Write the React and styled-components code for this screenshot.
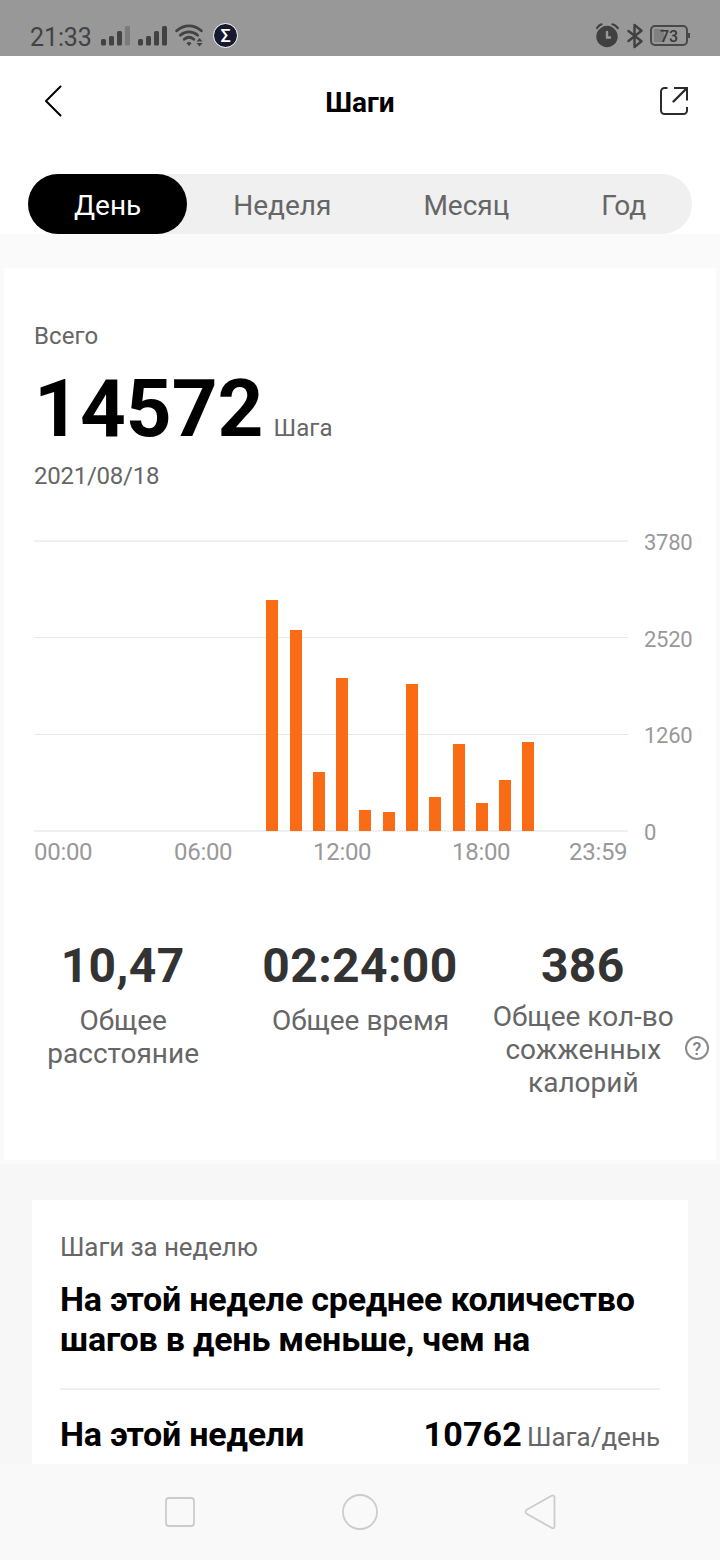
import React from 'react'
import styled, { createGlobalStyle } from 'styled-components'

const MAX_STEPS = 3780
const gridValues = [3780, 2520, 1260, 0]
const timeLabels = ['00:00', '06:00', '12:00', '18:00', '23:59']
const tabs = ['День', 'Неделя', 'Месяц', 'Год']
// steps per hour, 00 - 23
const hours = [
  0, 0, 0, 0, 0, 0, 0, 0, 0, 3016, 2626, 765,
  1988, 274, 244, 1910, 438, 1130, 360, 665, 1156, 0, 0, 0,
]

const SignalIcon = ({ weak }) => (
  <svg width='30' height='22' viewBox='0 0 30 22' fill='#424242'>
    <rect x='0' y='14' width='5' height='6.500' rx='1.500' />
    <rect x='8' y='11' width='5' height='9.500' rx='1.500' />
    <rect x='16' y='6' width='5' height='14.500' rx='1.500' />
    <rect x='24' y='1' width='5' height='19.500' rx='1.500' fill={weak ? '#7b7b7b' : '#424242'} />
  </svg>
)

const WifiIcon = () => (
  <svg width='28' height='23' viewBox='0 0 28 23' fill='none' stroke='#424242' strokeWidth='2.800' strokeLinecap='round'>
    <path d='M1.700 6.700C9 .200 19 .200 26.300 6.700' />
    <path d='M5.300 11.200C10.500 6.700 17.500 6.700 22.700 11.200' />
    <path d='M9.200 15.300C12.200 12.700 15.800 12.700 18.800 15.300' />
    <path d='M11.500 19.200a3.400 3.400 0 0 1 5 0L14 22Z' fill='#424242' stroke='none' />
    <path d='M21.500 17.500L24.500 14L27.500 17.500ZM21.500 19L24.500 22.500L27.500 19Z' fill='#424242' stroke='none' />
  </svg>
)

const AlarmIcon = () => (
  <svg width='24' height='25' viewBox='0 0 24 25' fill='none' strokeLinecap='round'>
    <circle cx='11' cy='13.500' r='10.700' fill='#404040' />
    <path d='M.800 5L5.500 1.300M16.500 1.300L21.500 5' stroke='#989898' strokeWidth='5' />
    <path d='M1.100 5Q2.800 2.300 5.500 1.300M16.500 1.300Q19.700 2.300 21.700 5' stroke='#404040' strokeWidth='2.200' />
    <path d='M11 9V14.500H14' stroke='#989898' strokeWidth='2.400' />
  </svg>
)

const BluetoothIcon = () => (
  <svg width='16' height='26' viewBox='0 0 16 26' fill='none' stroke='#404040' strokeWidth='2.400' strokeLinejoin='round' strokeLinecap='round'>
    <path d='M1.500 8L14.500 18.300L7.500 24V2L14.500 7.700L1.500 18' />
  </svg>
)

const BackIcon = () => (
  <svg width='20' height='32' viewBox='0 0 20 32' fill='none' stroke='#000' strokeWidth='2' strokeLinecap='round' strokeLinejoin='round'>
    <path d='M16.500 1.500L2 16L16.500 30.500' />
  </svg>
)

const ShareIcon = () => (
  <svg width='30' height='30' viewBox='0 0 30 30' fill='none' stroke='#2b2b2b' strokeWidth='2'>
    <path d='M8.500 2H5.500a3.500 3.500 0 0 0-3.500 3.500V24.500A3.500 3.500 0 0 0 5.500 28H24.500A3.500 3.500 0 0 0 28 24.500V21' />
    <path d='M15 2H28V14.500' />
    <path d='M27.500 2.500L14.500 15.500' strokeWidth='2.400' strokeLinecap='round' />
  </svg>
)

const App = () => {
  return (
    <Screen>
      <GlobalStyle />
      <StatusBar>
        <Clock>21:33</Clock>
        <SignalIcon weak />
        <SignalIcon />
        <WifiIcon />
        <Badge>Σ</Badge>
        <StatusRight>
          <AlarmIcon />
          <BluetoothIcon />
          <Battery>73</Battery>
        </StatusRight>
      </StatusBar>
      <Header>
        <BackIcon />
        <Title>Шаги</Title>
        <ShareIcon />
      </Header>
      <Tabs>
        {tabs.map((tab, i) => (
          <Tab key={tab} $active={i === 0}>{tab}</Tab>
        ))}
      </Tabs>
      <Panel>
        <Summary>
          <Muted>Всего</Muted>
          <Total>
            <TotalValue>14572</TotalValue>
            <Muted>Шага</Muted>
          </Total>
          <Muted $narrow>2021/08/18</Muted>
        </Summary>
        <Chart>
          <Plot>
            {hours.map((steps, i) => (
              <Bar key={i} style={{ height: `${(steps / MAX_STEPS) * 100}%` }} />
            ))}
          </Plot>
          <Scale>
            {gridValues.map((value) => <span key={value}>{value}</span>)}
          </Scale>
        </Chart>
        <Times>
          {timeLabels.map((time) => <span key={time}>{time}</span>)}
        </Times>
        <Stats>
          <Stat>
            <StatBody>
              <StatValue>10,47</StatValue>
              <StatLabel>Общее расстояние</StatLabel>
            </StatBody>
          </Stat>
          <Stat>
            <StatBody>
              <StatValue>02:24:00</StatValue>
              <StatLabel>Общее время</StatLabel>
            </StatBody>
          </Stat>
          <Stat>
            <StatBody>
              <StatValue>386</StatValue>
              <StatLabel $tight>Общее кол-во сожженных калорий</StatLabel>
            </StatBody>
            <Help>?</Help>
          </Stat>
        </Stats>
      </Panel>
      <Week>
        <WeekCard>
          <WeekCaption>Шаги за неделю</WeekCaption>
          <WeekTitle>На этой неделе среднее количество шагов в день меньше, чем на</WeekTitle>
          <WeekRow>
            <WeekName>На этой недели</WeekName>
            <WeekValue>10762</WeekValue>
            <WeekUnit>Шага/день</WeekUnit>
          </WeekRow>
        </WeekCard>
      </Week>
      <NavBar>
        <svg width='36' height='36' viewBox='0 0 36 36'><rect x='4' y='4' width='28' height='28' rx='3' /></svg>
        <svg width='36' height='36' viewBox='0 0 36 36'><circle cx='18' cy='18' r='17' /></svg>
        <svg width='36' height='36' viewBox='0 0 36 36'><path d='M4.700 15.800L29.500 1.800Q32.500 .600 32.500 3.800V32Q32.500 35 29.500 33.800L4.700 19.800Q2.500 17.800 4.700 15.800Z' /></svg>
      </NavBar>
    </Screen>
  )
}

export default App

const GlobalStyle = createGlobalStyle`
  * {
    box-sizing: border-box;
  }
  body {
    margin: 0;
    font-family: Roboto, 'Liberation Sans', sans-serif;
  }
  svg {
    display: block;
    flex-shrink: 0;
  }
`
const Screen = styled.div`
  display: flex;
  flex-direction: column;
  width: 720px;
  height: 1560px;
  overflow: hidden;
  background: #fff;
`
const StatusBar = styled.div`
  display: flex;
  align-items: center;
  height: 56px;
  padding: 15px 30px 0;
  background: #989898;
  svg {
    margin-right: 7px;
  }
`
const Clock = styled.span`
  width: 71px;
  padding-top: 3px;
  font-size: 25px;
  letter-spacing: -0.1px;
  color: #424242;
`
const Badge = styled.span`
  width: 25px;
  height: 25px;
  margin-left: 3px;
  border: 1.5px solid #fff;
  border-radius: 50%;
  background: #171a2e;
  color: #fff;
  font-size: 18px;
  font-weight: 500;
  line-height: 23px;
  text-align: center;
`
const StatusRight = styled.div`
  display: flex;
  align-items: center;
  margin-left: auto;
`
const Battery = styled.span`
  position: relative;
  width: 38px;
  height: 21px;
  margin-right: 2px;
  border: 2px solid #484848;
  border-radius: 5px;
  background: linear-gradient(90deg, #808080 10px, #989898 10px) 2px 2px / 30px 13px no-repeat;
  color: #383838;
  font-size: 16px;
  font-weight: 500;
  line-height: 19px;
  text-align: center;
  &::after {
    content: '';
    position: absolute;
    right: -4px;
    top: 6px;
    width: 2px;
    height: 5px;
    background: #484848;
  }
`
const Header = styled.div`
  display: flex;
  align-items: center;
  justify-content: space-between;
  height: 90px;
  padding: 0 31px 0 44px;
`
const Title = styled.h1`
  margin: 3px 3px 0 0;
  font-size: 28px;
  font-weight: bold;
`
const Tabs = styled.div`
  display: flex;
  flex-shrink: 0;
  height: 60px;
  margin: 28px 28px 0;
  border-radius: 30px;
  background: #f0f0f0;
`
const Tab = styled.div`
  flex: 1 0 auto;
  padding: 0 46px;
  border-radius: 30px;
  background: ${props => props.$active ? '#000' : 'transparent'};
  color: ${props => props.$active ? '#fff' : '#666'};
  font-size: 28px;
  line-height: 64px;
  text-align: center;
`
const Panel = styled.div`
  flex-shrink: 0;
  height: 930px;
  border: 4px solid #fafafa;
  border-top-width: 34px;
  background: #fff;
`
const Summary = styled.div`
  padding: 54px 30px 0;
`
const Muted = styled.div`
  color: #666;
  font-size: 24px;
  line-height: 28px;
  letter-spacing: ${props => props.$narrow ? '-0.25px' : '0.1px'};
`
const Total = styled.div`
  display: flex;
  align-items: baseline;
  gap: 10px;
  height: 112px;
`
const TotalValue = styled.div`
  font-size: 80px;
  font-weight: bold;
  line-height: 118px;
`
const Chart = styled.div`
  display: flex;
  height: 292px;
  margin: 50px 0 0 30px;
`
const Plot = styled.div`
  display: grid;
  grid-template-columns: repeat(24, 1fr);
  align-items: end;
  justify-items: center;
  width: 594px;
  padding: 1px 18px 1px 17px;
  background: linear-gradient(
    #f0f0f0 2px, transparent 2px 97px,
    #e6e6e6 97px 98px, transparent 98px 194px,
    #e6e6e6 194px 195px, transparent 195px 290px,
    #f0f0f0 290px
  );
`
const Bar = styled.div`
  width: 12px;
  background: #fa6b16;
`
const Scale = styled.div`
  display: flex;
  flex-direction: column;
  justify-content: space-between;
  margin: -10px 0 -14px 16px;
  color: #999;
  font-size: 22px;
  line-height: 26px;
  letter-spacing: -0.3px;
`
const Times = styled.div`
  display: grid;
  grid-template-columns: 140px 139px 139px 117px 59px;
  width: 594px;
  margin: 6px 0 0 30px;
  color: #999;
  font-size: 24px;
  line-height: 28px;
  letter-spacing: -0.3px;
`
const Stats = styled.div`
  display: grid;
  grid-template-columns: repeat(3, 1fr);
  margin-top: 72px;
`
const Stat = styled.div`
  display: flex;
`
const StatBody = styled.div`
  flex: 1;
  text-align: center;
`
const StatValue = styled.div`
  color: #333;
  font-size: 48px;
  font-weight: bold;
  line-height: 56px;
  letter-spacing: 0.4px;
`
const StatLabel = styled.div`
  margin-top: ${props => props.$tight ? '6px' : '10px'};
  padding: 0 9px 0 10px;
  color: #666;
  font-size: 28px;
  line-height: 33px;
`
const Help = styled.span`
  width: 24px;
  height: 24px;
  margin: 98px 7px 0 -2px;
  border: 2px solid #8a8a8a;
  border-radius: 50%;
  color: #808080;
  font-size: 18px;
  font-weight: 500;
  line-height: 21px;
  text-align: center;
`
const Week = styled.div`
  flex: 1;
  padding: 36px 32px 0;
  background: #f7f7f7;
`
const WeekCard = styled.div`
  height: 264px;
  padding: 32px 28px 0;
  background: #fff;
`
const WeekCaption = styled.div`
  color: #666;
  font-size: 26px;
  line-height: 30px;
  letter-spacing: -0.1px;
`
const WeekTitle = styled.div`
  margin-top: 17px;
  font-size: 34px;
  font-weight: bold;
  line-height: 40px;
  letter-spacing: -0.22px;
`
const WeekRow = styled.div`
  display: flex;
  align-items: baseline;
  margin-top: 29px;
  padding-top: 24px;
  border-top: 2px solid #f0f0f0;
  line-height: 40px;
`
const WeekName = styled.div`
  flex: 1;
  font-size: 34px;
  font-weight: bold;
  letter-spacing: -0.22px;
`
const WeekValue = styled.div`
  font-size: 34px;
  font-weight: bold;
  letter-spacing: 0.2px;
`
const WeekUnit = styled.div`
  margin-left: 5px;
  color: #666;
  font-size: 26px;
`
const NavBar = styled.div`
  display: flex;
  justify-content: center;
  align-items: center;
  gap: 144px;
  height: 96px;
  background: #f9f9f9;
  svg {
    fill: none;
    stroke: #ccc;
    stroke-width: 1.8;
  }
`
